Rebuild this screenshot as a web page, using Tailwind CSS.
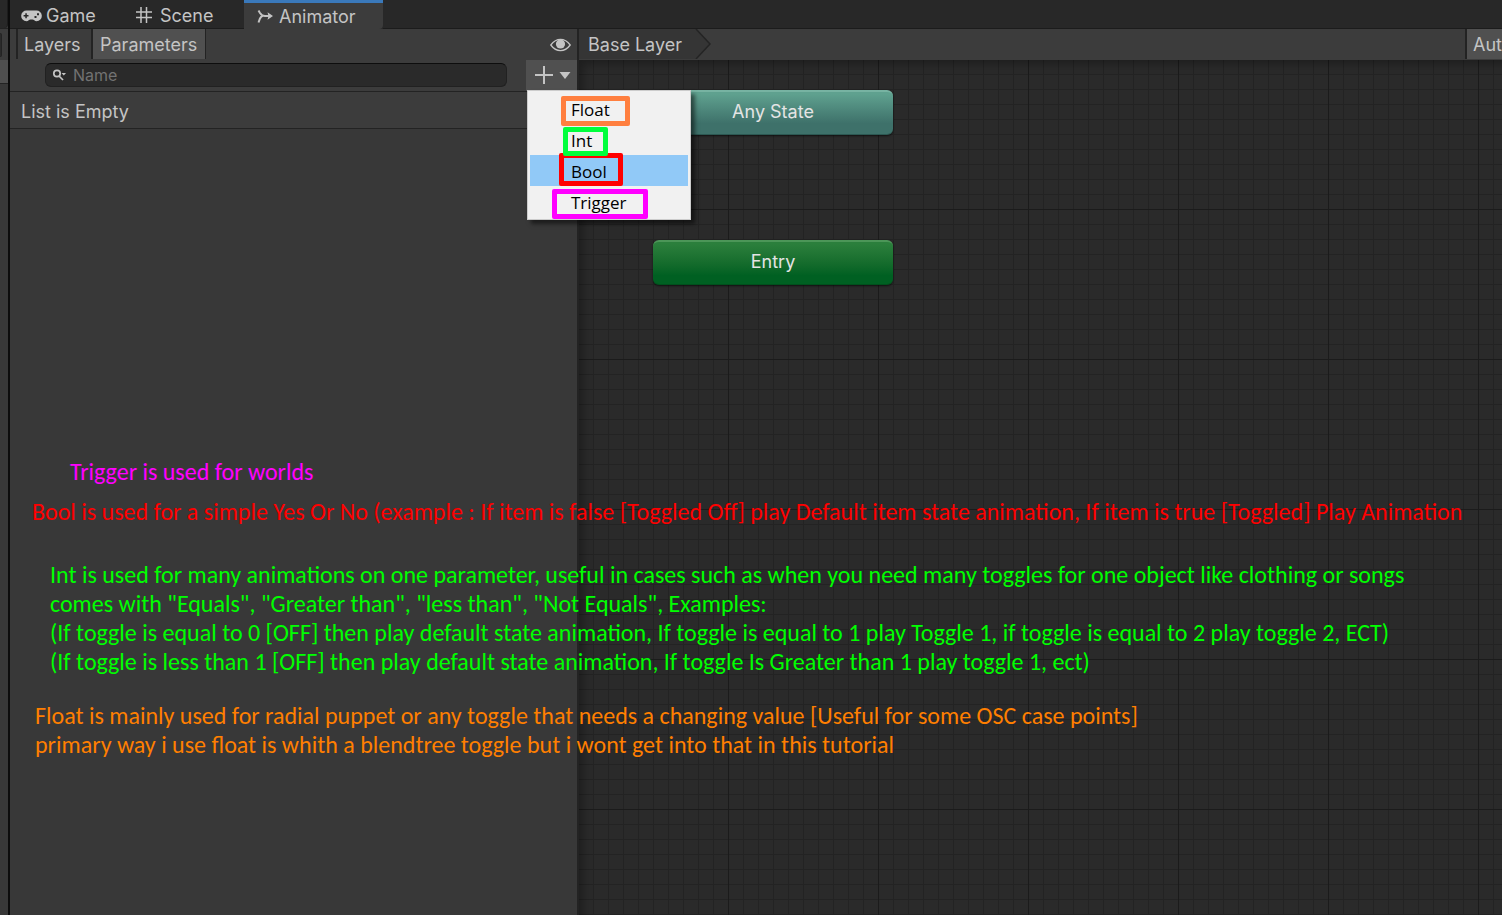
<!DOCTYPE html>
<html lang="en">
<head>
<meta charset="utf-8">
<title>Animator</title>
<script src="https://cdn.jsdelivr.net/npm/@tailwindcss/browser@4"></script>
</head>
<body class="relative flex h-screen overflow-hidden bg-[#383838] font-['Inter','Liberation_Sans',sans-serif] text-lg leading-6 text-[#c4c4c4]">
  <!-- Edge of the neighbouring dock panel -->
  <aside class="flex w-2 shrink-0 flex-col">
    <div class="h-7 rounded-br border-r border-[#1c1c1c] bg-[#282828]"></div>
    <div class="flex h-8 items-center border-t border-[#232323] bg-[#3c3c3c]"><div class="h-6 w-0.5 rounded-r border border-l-0 border-[#232323] bg-[#2a2a2a]"></div></div>
    <div class="h-[23px] bg-[#4f4f4f]"></div>
    <div class="flex-1 border-t border-[#232323]"></div>
  </aside>
  <div class="w-0.5 shrink-0 bg-[#0c0c0c]"></div>

  <main class="flex min-w-0 flex-1 flex-col">
    <nav class="flex h-[29px] shrink-0 bg-[#282828]">
      <button class="flex w-[114px] items-center gap-1 border-b border-[#1c1c1c] pt-1 pl-[11px]">
        <svg class="h-3 w-[21px] shrink-0" viewBox="0 0 21 12"><path fill="#c4c4c4" fill-rule="evenodd" d="M5.500 .5h10A5.300 5.300 0 0 1 20.800 5.500 A5.300 5.300 0 0 1 15.500 11.200C13.500 11.200 13 9.500 11.500 9.500h-2C8 9.500 7.500 11.200 5.500 11.200A5.300 5.300 0 0 1 .2 5.500 A5.300 5.300 0 0 1 5.500 .5ZM4.300 3.300v1.700H2.600v1.500h1.700v1.700h1.500V6.500h1.700V5H5.800V3.300ZM16 3.300v2h2v-2ZM13.500 6v2h2V6Z"/></svg>
        <span>Game</span>
      </button>
      <button class="flex w-[120px] items-center gap-2 border-b border-[#1c1c1c] pt-1 pl-3">
        <svg class="h-4 w-4 shrink-0 -translate-y-px" viewBox="0 0 16 16" fill="none" stroke="#c4c4c4" stroke-width="1.500"><path d="M5 0v16M10.500 0v16M0 5h16M0 10.500h16"/></svg>
        <span>Scene</span>
      </button>
      <button class="flex w-[139px] items-center gap-1 rounded-br border-t-[3px] border-[#3a79bb] bg-[#3c3c3c] pt-px pl-[13px]">
        <svg class="h-4 w-[18px] shrink-0" viewBox="0 0 18 16" fill="none" stroke="#c4c4c4" stroke-width="2"><path d="M1.500 1.500 3 4Q5 7 8 7h5M1.500 13.500l1.500-4Q4 7.500 6 6.500"/><path fill="#c4c4c4" stroke="none" d="M10.500 3.300l5.500 3.700-5.500 3.700 1-3.700Z"/></svg>
        <span>Animator</span>
      </button>
      <div class="flex-1 border-b border-[#1c1c1c]"></div>
    </nav>

    <div class="flex min-h-0 flex-1">
      <section class="relative flex w-[569px] shrink-0 flex-col border-r-2 border-[#232323]">
        <div class="flex h-[31px] bg-[#3c3c3c] pl-1.5">
          <button class="flex h-[30px] w-[75px] items-center border-l-2 border-[#232323] pt-0.5 pl-1.5">Layers</button>
          <button class="flex h-[30px] w-[115px] items-center border-r border-l-2 border-[#232323] bg-[#505050] pt-0.5 pl-[7px]">Parameters</button>
          <button aria-label="Toggle visibility" class="mr-1.5 ml-auto">
            <svg class="h-3.5 w-[21px]" viewBox="0 0 21 14"><path d="M.8 7Q5 1.300 10.500 1.300T20.200 7Q16 12.700 10.500 12.700T.8 7Z" fill="none" stroke="#c4c4c4" stroke-width="1.300"/><circle cx="10.500" cy="6" r="4.600" fill="#c4c4c4"/></svg>
          </button>
        </div>
        <div class="flex h-8 items-start border-b border-[#232323] bg-[#3c3c3c] pl-[35px]">
          <label class="mt-[3px] flex h-6 flex-1 items-center gap-[5px] rounded-md border border-[#212121] border-t-[#0d0d0d] bg-[#2a2a2a] pl-1.5">
            <svg class="h-3 w-4 shrink-0" viewBox="0 0 16 12" fill="none" stroke="#c4c4c4" stroke-width="1.700"><circle cx="5" cy="4.500" r="3.200"/><path d="m7 7 4 4"/><path fill="#c4c4c4" stroke="none" d="M9.500 4h4.500l-2.200 2.500Z"/></svg>
            <input aria-label="Name" placeholder="Name" class="min-w-0 flex-1 bg-transparent text-base outline-none placeholder:text-[#727272]">
          </label>
          <button aria-label="Add parameter" class="ml-[19px] flex h-[31px] w-[51px] items-center gap-1.5 bg-[#505050] pl-2">
            <svg class="h-[19px] w-[19px]" viewBox="0 0 19 19" stroke="#c4c4c4" stroke-width="2"><path d="M10 0v18M1 9h18"/></svg>
            <svg class="h-[7px] w-3" viewBox="0 0 12 7"><path fill="#c4c4c4" d="M.5 0h11L6 7Z"/></svg>
          </button>
        </div>
        <p class="flex h-[37px] items-center border-b border-[#232323] bg-[#3c3c3c] pt-1 pl-[11px]">List is Empty</p>

        <!-- Parameter type menu -->
        <div role="menu" class="absolute top-[61px] left-[517px] z-10 flex w-[164px] flex-col border border-[#ccc] bg-[#f1f1f1] p-0.5 font-['Open_Sans','Noto_Sans',sans-serif] text-[17px] text-black shadow-[4px_4px_4px_rgba(0,0,0,0.5)]">
          <button role="menuitem" class="h-[31px] pt-0.5 pl-[41px] text-left">Float</button>
          <button role="menuitem" class="h-[31px] pt-0.5 pl-[41px] text-left">Int</button>
          <button role="menuitem" class="h-[31px] bg-[#91c9f7] pt-0.5 pl-[41px] text-left">Bool</button>
          <button role="menuitem" class="h-[31px] pt-0.5 pl-[41px] text-left">Trigger</button>
          <div class="pointer-events-none absolute top-[5px] left-[33px] h-[30px] w-[69px] rounded-xs border-5 border-[#ff7f3f]"></div>
          <div class="pointer-events-none absolute top-[62px] left-[31px] h-[33px] w-[64px] rounded-xs border-5 border-[#f00]"></div>
          <div class="pointer-events-none absolute top-9 left-[35px] h-[29px] w-[45px] rounded-xs border-5 border-[#00ff3c]"></div>
          <div class="pointer-events-none absolute top-[98px] left-6 h-[30px] w-[96px] rounded-xs border-5 border-[#f0f]"></div>
        </div>
      </section>

      <section class="flex min-w-0 flex-1 flex-col">
        <div class="flex h-[31px] shrink-0 bg-[#3c3c3c]">
          <button class="flex h-[30px] w-[116px] items-center bg-[#353535] pt-0.5 pl-[9px] whitespace-nowrap">Base Layer</button>
          <svg class="h-[30px] w-4" viewBox="0 0 16 30"><path fill="#353535" d="M0 0h1l14 15L1 30H0Z"/><path fill="none" stroke="#242424" stroke-width="1.500" d="m1 0 14 15L1 30"/></svg>
          <button class="ml-auto flex h-[30px] w-[37px] items-center overflow-hidden border-l-2 border-[#232323] bg-[#505050] pt-0.5 pl-1.5 whitespace-nowrap">Aut</button>
        </div>
        <!-- State machine canvas -->
        <div class="relative flex-1 bg-[#2a2a2a] bg-[linear-gradient(to_right,transparent_149px,#1b1b1b_149px),linear-gradient(to_bottom,transparent_149px,#1b1b1b_149px),linear-gradient(to_right,transparent_14px,#232323_14px),linear-gradient(to_bottom,transparent_14px,#232323_14px)] bg-[size:150px_150px,150px_150px,15px_15px,15px_15px] shadow-[inset_8px_8px_10px_-4px_rgba(0,0,0,0.3)]">
          <div class="absolute top-[30px] left-[74px] flex h-[45px] w-60 items-center justify-center rounded-md border-t-2 border-b border-t-[#77b3a2] border-b-[#2c5852] bg-linear-to-b from-[#5fa18f] from-5% to-[#3e716a] to-75% pb-0.5 text-[#e4e4e4] shadow-[0_1px_2px_rgba(0,0,0,0.6)]">Any State</div>
          <div class="absolute top-[180px] left-[74px] flex h-[45px] w-60 items-center justify-center rounded-md border-t-2 border-b border-t-[#4c9658] border-b-[#00501c] bg-linear-to-b from-[#2b7f3c] from-5% to-[#006022] to-80% pb-0.5 text-[#e4e4e4] shadow-[0_1px_2px_rgba(0,0,0,0.6)]">Entry</div>
        </div>
      </section>
    </div>
  </main>

  <!-- Notes written over the window -->
  <div class="pointer-events-none absolute top-[457px] left-8 z-20 flex flex-col font-['Carlito','Lato',sans-serif] text-2xl leading-[29px] whitespace-nowrap">
    <p class="pl-[38px] text-[#f0f]">Trigger is used for worlds</p>
    <p class="pt-[11px] text-[#f00]">Bool is used for a simple Yes Or No (example : If item is false [Toggled Off] play Default item state animation, If item is true [Toggled] Play Animation</p>
    <p class="pt-[34px] pl-[18px] text-[#0f0]">Int is used for many animations on one parameter, useful in cases such as when you need many toggles for one object like clothing or songs<br>comes with "Equals", "Greater than", "less than", "Not Equals", Examples:<br>(If toggle is equal to 0 [OFF] then play default state animation, If toggle is equal to 1 play Toggle 1, if toggle is equal to 2 play toggle 2, ECT)<br>(If toggle is less than 1 [OFF] then play default state animation, If toggle Is Greater than 1 play toggle 1, ect)</p>
    <p class="pt-[25px] pl-[3px] text-[#ff7f00]">Float is mainly used for radial puppet or any toggle that needs a changing value [Useful for some OSC case points]<br>primary way i use float is whith a blendtree toggle but i wont get into that in this tutorial</p>
  </div>
</body>
</html>
